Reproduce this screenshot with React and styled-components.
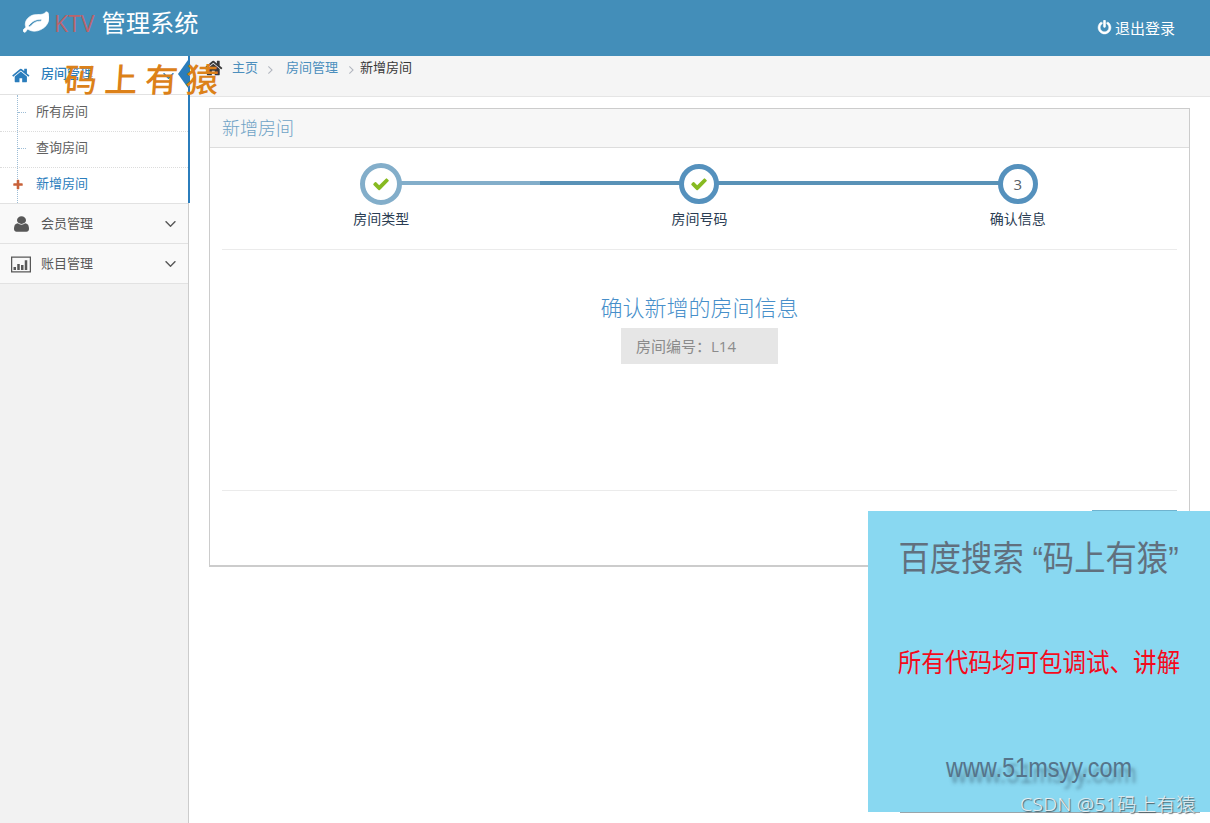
import React from "react";
import styled, { createGlobalStyle } from "styled-components";

const ICONS = {
  home: "M1408 992v480q0 26-19 45t-45 19h-384v-384h-256v384h-384q-26 0-45-19t-19-45v-480q0-1 .5-3t.5-3l575-474 575 474q1 2 1 6zm223-69l-62 74q-8 9-21 11h-3q-13 0-21-7l-692-577-692 577q-12 8-24 7-13-2-21-11l-62-74q-8-10-7-23.5t11-21.5l719-599q32-26 76-26t76 26l244 204v-195q0-14 9-23t23-9h192q14 0 23 9t9 23v408l219 182q10 8 11 21.5t-7 23.5z",
  power: "M1664 896q0 156-61 298t-164 245-245 164-298 61-298-61-245-164-164-245-61-298q0-182 80.5-343t226.5-270q43-32 95.5-25t83.5 50q32 42 24.5 94.5t-49.5 84.5q-98 74-151.5 181t-53.5 228q0 104 40.5 198.5t109.5 163.5 163.5 109.5 198.5 40.5 198.5-40.5 163.5-109.5 109.5-163.5 40.5-198.5q0-121-53.5-228t-151.5-181q-42-32-49.5-84.5t24.5-94.5q31-43 84-50t95 25q146 109 226.5 270t80.5 343zm-640-768v640q0 52-38 90t-90 38-90-38-38-90v-640q0-52 38-90t90-38 90 38 38 90z",
  check: "M1671 566q0 40-28 68l-724 724-136 136q-28 28-68 28t-68-28l-136-136-362-362q-28-28-28-68t28-68l136-136q28-28 68-28t68 28l294 295 656-657q28-28 68-28t68 28l136 136q28 28 28 68z",
  plus: "M1600 736v192q0 40-28 68t-68 28h-416v416q0 40-28 68t-68 28h-192q-40 0-68-28t-28-68v-416h-416q-40 0-68-28t-28-68v-192q0-40 28-68t68-28h416v-416q0-40 28-68t68-28h192q40 0 68 28t28 68v416h416q40 0 68 28t28 68z",
  user: "M1536 1399q0 109-62.5 187t-150.5 78h-854q-88 0-150.5-78t-62.5-187q0-85 8.5-160.5t31.5-152 58.5-131 94-89 134.5-34.5q131 128 313 128t313-128q76 0 134.5 34.5t94 89 58.5 131 31.5 152 8.5 160.5zm-256-887q0 159-112.5 271.5t-271.5 112.5-271.5-112.5-112.5-271.5 112.5-271.5 271.5-112.5 271.5 112.5 112.5 271.5z",
  down: "M1395 736q0 13-10 23l-466 466q-10 10-23 10t-23-10l-466-466q-10-10-10-23t10-23l50-50q10-10 23-10t23 10l393 393 393-393q10-10 23-10t23 10l50 50q10 10 10 23z",
  leaf: "M1280 704q0-26-19-45t-45-19q-172 0-318 49.5t-259.5 134-235.5 219.5q-19 21-19 45 0 26 19 45t45 19q24 0 45-19 27-24 74-71t67-66q137-124 268.5-176t313.5-52q26 0 45-19t19-45zm512-198q0 95-20 193-46 224-184.5 383t-357.5 268q-214 108-438 108-148 0-286-47-15-5-88-42t-96-37q-16 0-39.5 32t-45 70-52.5 70-60 32q-43 0-63.5-17.5t-45.5-59.5q-2-4-6-11t-5.5-10-3-9.5-1.5-13.5q0-35 31-73.5t68-65.5 68-56 31-48q0-4-14-38t-16-44q-9-51-9-104 0-115 43.5-220t119-184.5 170.5-139 204-95.5q55-18 145-25.5t179.5-9 178.5-6 163.5-24 113.5-56.5l29.5-29.5 29.5-28 27-20 36.5-16 43.5-4.5q39 0 70.5 46t47.5 112 24 124 8 96z",
  chart: "M0 64h2048v1664h-2048zM128 192v1408h1792v-1408zM256 1152h256v320h-256zM640 832h256v640h-256zM1024 960h256v512h-256zM1408 448h256v1024h-256z",
};

const GlobalStyle = createGlobalStyle`
  * { box-sizing: border-box; }
  body {
    margin: 0;
    background: #fff;
    color: #393939;
    font-family: "Open Sans", "Noto Sans CJK SC", sans-serif;
    font-size: 13px;
    overflow: hidden;
  }
`;

const Page = styled.div`
  display: flex;
  flex-direction: column;
  height: 823px;
  position: relative;
`;

const Navbar = styled.header`
  display: flex;
  justify-content: space-between;
  height: 56px;
  padding: 0 35px 0 23px;
  background: #438eb9;
  color: #fff;
`;

const Brand = styled.div`
  display: flex;
  align-items: center;
  height: 46px;
  font-size: 24.3px;
  line-height: 46px;
  white-space: pre;
`;

const BrandRed = styled.span`
  margin: 0 7px 0 5px;
  font-size: 23px;
  color: #b9646c;
`;

const Logout = styled.a`
  display: flex;
  align-items: center;
  gap: 3px;
  height: 55px;
  font-size: 15px;
`;

const Glyph = styled.svg`
  flex: none;
  display: block;
  fill: currentColor;
  transform: ${p => p.$turn ? `rotate(${p.$turn}deg)` : "none"};
`;

const Body = styled.div`
  display: flex;
  flex: 1;
`;

const Sidebar = styled.nav`
  width: 189px;
  flex: none;
  background: #f2f2f2;
  border-right: 1px solid #ccc;
`;

const OpenGroup = styled.div`
  position: relative;
  width: 190px;
  height: 147px;
  background: #fff;
  border-right: 2px solid #2b7dbc;
`;

const Arrow = styled.span`
  position: absolute;
  top: 4px;
  right: 0;
  border: solid transparent;
  border-width: 14px 10px 14px 0;
  border-right-color: #2b7dbc;
`;

const MenuItem = styled.div`
  display: flex;
  align-items: center;
  height: ${p => p.$active ? 39 : 40}px;
  padding: 0 ${p => p.$active ? 10 : 8}px 0 11px;
  background: ${p => p.$active ? "#fff" : "#f9f9f9"};
  border-bottom: 1px solid #e2e2e2;
  color: ${p => p.$active ? "#2b7dbc" : "#585858"};
  font-weight: ${p => p.$active ? 500 : 400};
`;

const Groups = styled.div`
  border-top: 1px solid #e2e2e2;
`;

const MenuIcon = styled.span`
  display: flex;
  justify-content: center;
  width: 20px;
  padding-top: 1px;
  margin-right: 10px;
`;

const MenuText = styled.span`
  flex: 1;
  padding-bottom: ${p => p.$raised ? 5 : 2}px;
`;

const SubList = styled.div`
  position: relative;
  &::before {
    content: "";
    position: absolute;
    left: 17px;
    top: 0;
    bottom: 0;
    border-left: 1px dotted #9dbdd6;
  }
`;

const SubItem = styled.div`
  display: flex;
  align-items: center;
  height: 36px;
  padding: 0 0 2px 12px;
  color: ${p => p.$active ? "#2b7dbc" : "#616161"};
  & + & { border-top: 1px dotted #dcdcdc; }
`;

const SubMark = styled.span`
  display: flex;
  width: 24px;
  color: #c86139;
  position: relative;
`;

const SubText = styled.span`
  padding-bottom: 4px;
`;

const Tick = styled.span`
  width: 8px;
  margin-left: 6px;
  border-top: 1px dotted #9dbdd6;
`;

const Main = styled.main`
  flex: 1;
  min-width: 0;
`;

const Breadcrumb = styled.div`
  display: flex;
  align-items: flex-start;
  height: 41px;
  padding: 2px 0 0 15px;
  background: #f5f5f5;
  border-bottom: 1px solid #e5e5e5;
  line-height: 19px;
`;

const Crumb = styled.a`
  margin: 0 ${p => p.$gap}px 0 ${p => p.$first ? 8 : 0}px;
  color: #4c8fbd;
`;

const Sep = styled.span`
  width: ${p => p.$wide ? 23 : 16}px;
  padding-top: 5px;
  color: #b2b6bf;
`;

const Widget = styled.section`
  margin: 11px 20px 0 20px;
  height: 459px;
  border: 1px solid #ccc;
  border-bottom-width: 2px;
`;

const WidgetHead = styled.h4`
  margin: 0;
  height: 39px;
  padding-left: 12px;
  background: #f7f7f7;
  border-bottom: 1px solid #ddd;
  color: #6fa3c6;
  font-size: 18px;
  font-weight: 300;
  line-height: 38px;
`;

const WidgetBody = styled.div`
  padding: 15px 12px 0;
`;

const Steps = styled.div`
  display: flex;
  height: 87px;
  border-bottom: 1px solid #ebebeb;
`;

const Step = styled.div`
  position: relative;
  flex: 1;
  display: flex;
  flex-direction: column;
  align-items: center;
  &::before {
    content: "";
    position: absolute;
    z-index: -1;
    top: 18px;
    left: ${p => p.$place === "first" ? "50%" : "0"};
    right: ${p => p.$place === "last" ? "50%" : "0"};
    height: 4px;
    background: ${p => p.$faded ? "#83aeca" : "#5992b7"};
  }
`;

const Circle = styled.div`
  display: flex;
  align-items: center;
  justify-content: center;
  width: ${p => p.$faded ? 42 : 40}px;
  height: ${p => p.$faded ? 42 : 40}px;
  margin: ${p => p.$faded ? "0" : "1px 0"};
  border: 5px solid ${p => p.$faded ? "#83aeca" : "#5591bd"};
  border-radius: 50%;
  background: #fff;
  color: ${p => p.$done ? "#87ba21" : "#5a6168"};
  font-size: 15px;
`;

const StepTitle = styled.span`
  margin-top: 4px;
  font-size: 14px;
  line-height: 20px;
  color: #2b3d53;
`;

const Content = styled.div`
  display: flex;
  flex-direction: column;
  align-items: center;
  height: 241px;
  padding-top: 41px;
  border-bottom: 1px solid #ebebeb;
`;

const ContentTitle = styled.h3`
  margin: 0;
  height: 37px;
  font-size: 22px;
  font-weight: 300;
  line-height: 32px;
  color: #478fca;
`;

const RoomNo = styled.div`
  width: 157px;
  height: 36px;
  padding-left: 15px;
  background: #e6e6e6;
  color: #8b8b8b;
  font-size: 15px;
  line-height: 36px;
`;

const Actions = styled.div`
  display: flex;
  justify-content: flex-end;
  padding-top: 19px;
`;

const NextButton = styled.button`
  width: 85px;
  height: 34px;
  border: 0;
  background: #6fb3cf;
`;

const Watermark = styled.div`
  position: absolute;
  left: 64px;
  top: 57px;
  color: #dc8119;
  font-family: "Liberation Serif", "Noto Sans CJK SC", serif;
  font-size: 33px;
  font-weight: 500;
  letter-spacing: 7.5px;
  line-height: 48px;
  white-space: nowrap;
  transform: skewX(-4deg);
`;

const Promo = styled.aside`
  position: absolute;
  left: 868px;
  top: 511px;
  display: flex;
  flex-direction: column;
  align-items: center;
  width: 342px;
  height: 301px;
  background: #89d8f1;
  font-family: "Liberation Sans", "Noto Sans CJK SC", sans-serif;
  white-space: nowrap;
`;

const PromoTitle = styled.div`
  margin-top: 22px;
  font-size: 35px;
  line-height: 52px;
  color: #61707e;
  transform: scaleX(0.895);
`;

const PromoText = styled.div`
  margin-top: 58px;
  font-size: 26px;
  line-height: 40px;
  color: #f50a1c;
  transform: scaleX(0.905);
`;

const PromoSite = styled.div`
  margin-top: 70px;
  font-size: 27px;
  line-height: 30px;
  color: #56748a;
  text-shadow: 5px 6px 4px rgba(50, 80, 100, 0.5);
  transform: scaleX(0.87);
`;

const PromoEdge = styled.span`
  position: absolute;
  left: 32px;
  top: 301px;
  width: 300px;
  height: 1px;
  background: #9aa5aa;
`;

const Credit = styled.div`
  position: absolute;
  right: 14px;
  bottom: 5px;
  font-family: "Noto Sans", "Noto Sans CJK SC", sans-serif;
  font-size: 18px;
  font-weight: 300;
  letter-spacing: 0.2px;
  line-height: 27px;
  color: #e6eef1;
  text-shadow: 1px 1px 1px #4c5a60;
  white-space: nowrap;
  transform: scaleX(1.08);
  transform-origin: right;
`;

function Icon({ name, size, width, turn, bold }) {
  return (
    <Glyph viewBox={name === "chart" ? "0 0 2048 1792" : "0 0 1792 1792"}
      preserveAspectRatio="none" width={width || size} height={size} $turn={turn}>
      <path fillRule={name === "chart" ? "evenodd" : "nonzero"} d={ICONS[name]}
        stroke="currentColor" strokeWidth={bold || 0} />
    </Glyph>
  );
}

const ROOM_LINKS = ["所有房间", "查询房间", "新增房间"];
const GROUPS = [
  { title: "会员管理", icon: "user", size: 18, width: 21 },
  { title: "账目管理", icon: "chart", size: 17, width: 20 },
];
const STEPS = [
  { title: "房间类型", place: "first", done: true, faded: true },
  { title: "房间号码", place: "middle", done: true },
  { title: "确认信息", place: "last" },
];

function Menu() {
  return (
    <Sidebar>
      <OpenGroup>
        <MenuItem $active>
          <MenuIcon><Icon name="home" size={19} /></MenuIcon>
          <MenuText $raised>房间管理</MenuText>
          <Icon name="down" size={19} />
        </MenuItem>
        <Arrow />
        <SubList>
          {ROOM_LINKS.map((link, i) => (
            <SubItem key={link} $active={i === 2}>
              <SubMark>{i === 2 ? <Icon name="plus" size={12} /> : <Tick />}</SubMark>
              <SubText>{link}</SubText>
            </SubItem>
          ))}
        </SubList>
      </OpenGroup>
      <Groups>
        {GROUPS.map(group => (
          <MenuItem key={group.title}>
            <MenuIcon><Icon name={group.icon} size={group.size} width={group.width} /></MenuIcon>
            <MenuText>{group.title}</MenuText>
            <Icon name="down" size={19} />
          </MenuItem>
        ))}
      </Groups>
    </Sidebar>
  );
}

function App() {
  return (
    <>
      <GlobalStyle />
      <Page>
        <Navbar>
          <Brand>
            <Icon name="leaf" size={26} bold={50} />
            <BrandRed>KTV</BrandRed>
            管理系统
          </Brand>
          <Logout><Icon name="power" size={15} bold={60} />退出登录</Logout>
        </Navbar>
        <Body>
          <Menu />
          <Main>
            <Breadcrumb>
              <Icon name="home" size={20} />
              <Crumb $first $gap={5}>主页</Crumb>
              <Sep $wide><Icon name="down" size={14} turn={-90} /></Sep>
              <Crumb $gap={6}>房间管理</Crumb>
              <Sep><Icon name="down" size={14} turn={-90} /></Sep>
              <span>新增房间</span>
            </Breadcrumb>
            <Widget>
              <WidgetHead>新增房间</WidgetHead>
              <WidgetBody>
                <Steps>
                  {STEPS.map((step, i) => (
                    <Step key={step.title} $place={step.place} $faded={step.faded}>
                      <Circle $done={step.done} $faded={step.faded}>
                        {step.done ? <Icon name="check" size={18} /> : i + 1}
                      </Circle>
                      <StepTitle>{step.title}</StepTitle>
                    </Step>
                  ))}
                </Steps>
                <Content>
                  <ContentTitle>确认新增的房间信息</ContentTitle>
                  <RoomNo>房间编号：L14</RoomNo>
                </Content>
                <Actions><NextButton aria-label="next" /></Actions>
              </WidgetBody>
            </Widget>
          </Main>
        </Body>
        <Watermark>码上有猿</Watermark>
        <Promo>
          <PromoTitle>百度搜索 “码上有猿”</PromoTitle>
          <PromoText>所有代码均可包调试、讲解</PromoText>
          <PromoSite>www.51msyy.com</PromoSite>
          <PromoEdge />
        </Promo>
        <Credit>CSDN @51码上有猿</Credit>
      </Page>
    </>
  );
}

export default App;
